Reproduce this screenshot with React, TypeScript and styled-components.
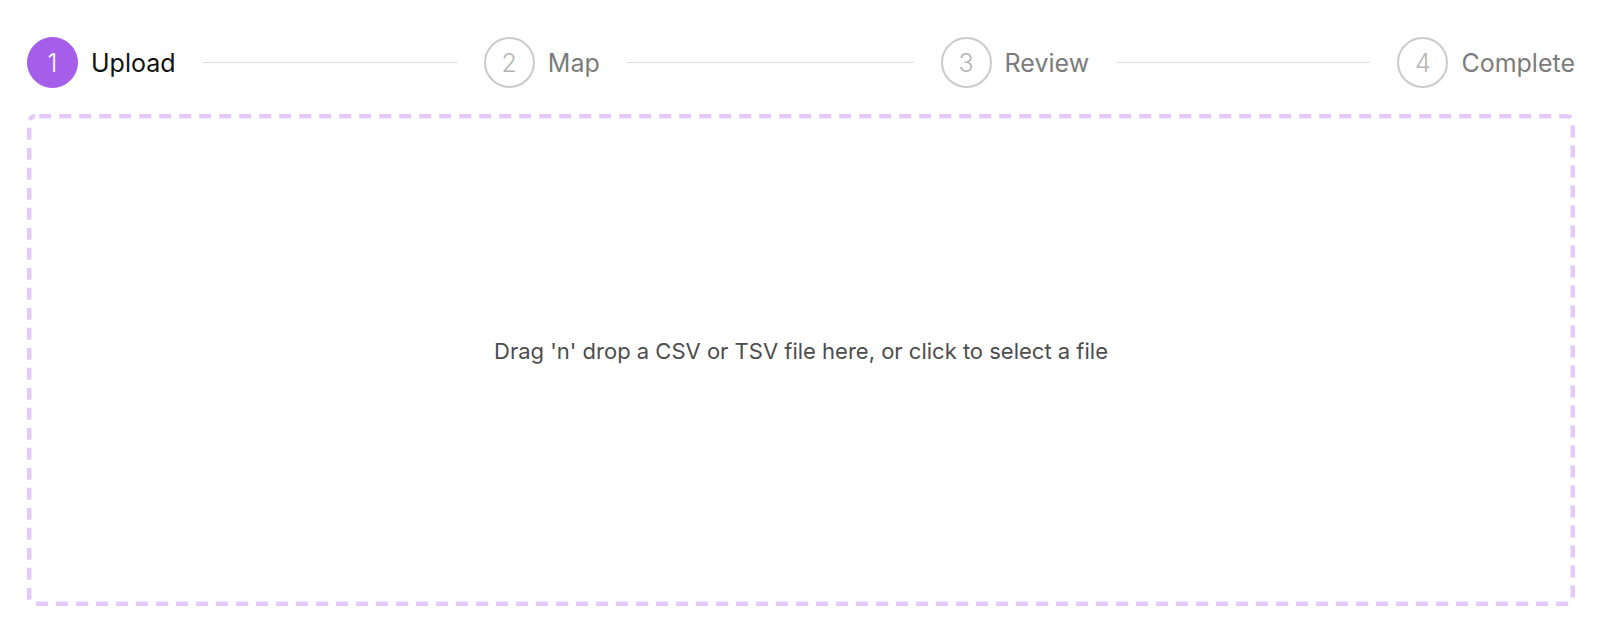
import React from "react";
import styled, { createGlobalStyle, css } from "styled-components";

const GlobalStyle = createGlobalStyle`
  html, body {
    margin: 0;
    padding: 0;
    background: #ffffff;
  }
  body {
    font-family: Inter, "Noto Sans", "Liberation Sans", sans-serif;
    -webkit-font-smoothing: antialiased;
  }
`;

const Page = styled.div`
  padding: 37px 25px 0 27px;
  display: flex;
  flex-direction: column;
  gap: 26px;
`;

const Stepper = styled.ol`
  display: flex;
  align-items: center;
  margin: 0;
  padding: 0;
  list-style: none;
`;

const Step = styled.li<{ $last?: boolean }>`
  display: flex;
  align-items: center;
  flex: ${(p) => (p.$last ? "0 0 auto" : "1 1 0")};
  min-width: 0;
`;

const Indicator = styled.span<{ $active?: boolean }>`
  box-sizing: border-box;
  width: 51px;
  height: 51px;
  border-radius: 50%;
  display: flex;
  align-items: center;
  justify-content: center;
  flex-shrink: 0;
  font-size: 25px;
  font-weight: 300;
  ${(p) =>
    p.$active
      ? css`
          background: #a55eea;
          color: #ffffff;
          border: 1.5px solid #a55eea;
        `
      : css`
          background: #ffffff;
          color: #b5b5b5;
          border: 2px solid #cbcbcb;
        `}
`;

const Label = styled.span<{ $active?: boolean }>`
  margin-left: 13px;
  font-size: 25px;
  font-weight: 400;
  white-space: nowrap;
  color: ${(p) => (p.$active ? "#111111" : "#7c7c7c")};
`;

const Separator = styled.span`
  flex: 1;
  height: 1px;
  background: #dedede;
  margin: 0 27px;
`;

const DropZone = styled.div`
  position: relative;
  box-sizing: border-box;
  height: 492px;
  display: flex;
  align-items: center;
  justify-content: center;
  padding-bottom: 18px;
  cursor: pointer;
`;

const DashedFrame = styled.svg`
  position: absolute;
  inset: 0;
  width: 100%;
  height: 100%;
  pointer-events: none;
  overflow: visible;
`;

const FrameRect = styled.rect`
  x: 2.25px;
  y: 2.25px;
  width: calc(100% - 4.5px);
  height: calc(100% - 4.5px);
  rx: 6px;
  ry: 6px;
  fill: none;
  stroke: #e4c9fd;
  stroke-width: 4.5px;
  stroke-dasharray: 12 8;
  stroke-dashoffset: -4;
`;

const DropText = styled.p`
  margin: 0;
  font-size: 22px;
  color: #4d4d4d;
`;

const steps = ["Upload", "Map", "Review", "Complete"];

export default function App() {
  return (
    <>
      <GlobalStyle />
      <Page>
        <Stepper>
          {steps.map((s, i) => {
            const last = i === steps.length - 1;
            const active = i === 0;
            return (
              <Step key={s} $last={last}>
                <Indicator $active={active}>{i + 1}</Indicator>
                <Label $active={active}>{s}</Label>
                {!last && <Separator />}
              </Step>
            );
          })}
        </Stepper>
        <DropZone>
          <DashedFrame aria-hidden="true">
            <FrameRect />
          </DashedFrame>
          <DropText>Drag 'n' drop a CSV or TSV file here, or click to select a file</DropText>
        </DropZone>
      </Page>
    </>
  );
}
